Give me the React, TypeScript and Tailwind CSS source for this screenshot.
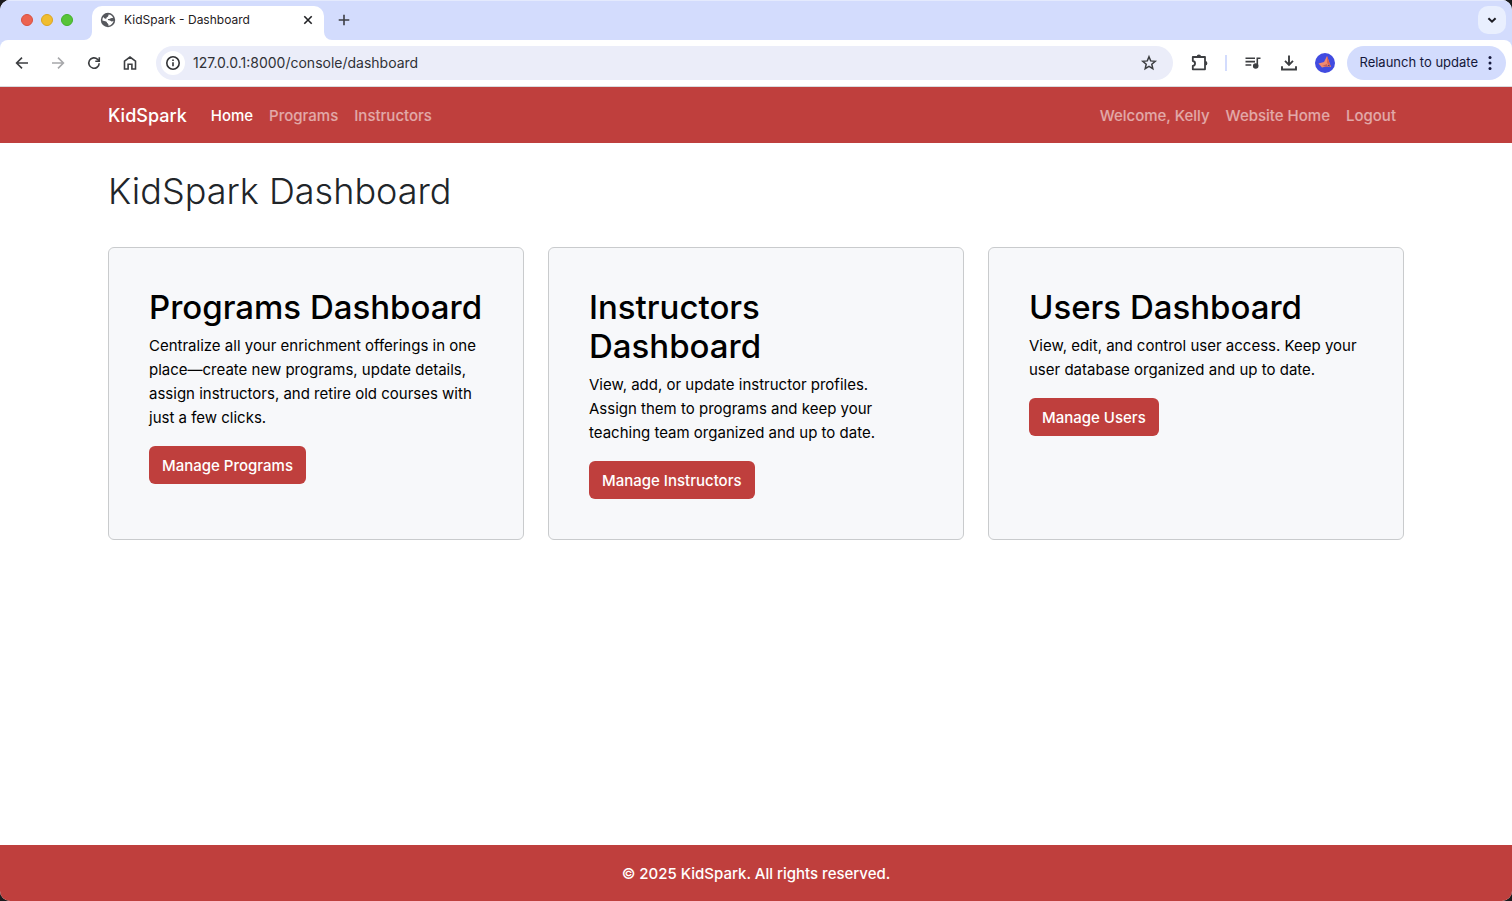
import type { ReactNode } from "react";

function Icon({ children, className = "size-5", viewBox = "0 0 20 20" }: { children: ReactNode; className?: string; viewBox?: string }) {
  return (
    <svg
      viewBox={viewBox}
      className={className}
      fill="none"
      stroke="currentColor"
      strokeWidth="1.6"
      aria-hidden="true"
    >
      {children}
    </svg>
  );
}

function ToolButton({ label, children, className = "text-[#3c3e41]" }: { label: string; children: ReactNode; className?: string }) {
  return (
    <button aria-label={label} className={`flex size-9 shrink-0 items-center justify-center rounded-full ${className}`}>
      {children}
    </button>
  );
}

function TabStrip() {
  return (
    <div className="flex h-10 items-end bg-[#d3dcfd] shadow-[inset_0_1px_0_#e4eafd]">
      <div className="flex h-10 w-[84px] items-center gap-2 pl-[21px]">
        <span className="size-3 rounded-full border border-[#d8503f] bg-[#ec6350]" />
        <span className="size-3 rounded-full border border-[#dba520] bg-[#f0bd2f]" />
        <span className="size-3 rounded-full border border-[#43b02a] bg-[#57c438]" />
      </div>
      <svg className="size-2 shrink-0" viewBox="0 0 8 8" fill="#fff" aria-hidden="true">
        <path d="M8 0v8H0a8 8 0 0 0 8-8z" />
      </svg>
      <div className="flex h-[34px] w-[232px] items-center rounded-t-[10px] bg-white pr-2 pb-1.5 pl-2">
        <svg className="size-4 shrink-0" viewBox="0 0 16 16" aria-hidden="true">
          <circle cx="8" cy="8" r="7.2" fill="#56585d" />
          <path
            d="M8.600 2.400c2.200.2 3.800 1.600 4.500 3.300-.9.400-2 .1-2.800.700-.6.500-1.500.500-2.300.600-.5.500.2 1.300 1 1.300 1.300 0 1.700 1.200 2.900 1.100.6 0 1.200-.4 1.700-.7-.5 2.600-2.500 4.700-5.200 5-.1-1.100.3-1.600-.6-2.200-1.100-.7-.6-1.700-1.700-2.100C4.900 9 3.600 9 2.400 8.500c-.1-1.200.2-2.400.8-3.400.6.800 1.500 1.700 2.500 1.700.9 0 .5-1.200 1.200-1.600.9-.6 1.500-.9 1.700-2.800z"
            fill="#fff"
          />
        </svg>
        <span className="ml-2 flex-1 text-xs text-[#1f2023]">KidSpark - Dashboard</span>
        <button aria-label="Close tab" className="flex size-4 items-center justify-center text-[#202124]">
          <Icon viewBox="0 0 16 16" className="size-4">
            <path d="M4.300 4.300l7.400 7.400M11.700 4.300l-7.400 7.400" />
          </Icon>
        </button>
      </div>
      <svg className="size-2 shrink-0" viewBox="0 0 8 8" fill="#fff" aria-hidden="true">
        <path d="M0 0v8h8a8 8 0 0 1-8-8z" />
      </svg>
      <button aria-label="New tab" className="flex h-10 w-6 items-center justify-center text-[#3c3e44]">
        <Icon viewBox="0 0 16 16" className="size-4">
          <path d="M8 2.700v10.600M2.700 8h10.600" />
        </Icon>
      </button>
      <button
        aria-label="Search tabs"
        className="mr-1.5 mb-1.5 ml-auto flex size-7 items-center justify-center rounded-[10px] bg-[#e9effe] text-[#1c1c24]"
      >
        <Icon viewBox="0 0 16 16" className="size-4">
          <path d="M4.400 6.300L8 9.700l3.600-3.400" strokeWidth="2" />
        </Icon>
      </button>
    </div>
  );
}

function Toolbar() {
  return (
    <div className="bg-[#d3dcfd]">
      <div className="flex h-[47px] items-center rounded-t-lg border-b border-[#d9dade] bg-white pr-1.5 pl-1">
        <ToolButton label="Back">
          <Icon>
            <path d="M16 10H4.500M10 4.600L4.600 10l5.400 5.400" />
          </Icon>
        </ToolButton>
        <ToolButton label="Forward" className="text-[#a7a8ab]">
          <Icon>
            <path d="M4 10h11.500M10 4.600l5.400 5.400L10 15.400" />
          </Icon>
        </ToolButton>
        <ToolButton label="Reload">
          <Icon>
            <path d="M15.200 10.200A5.200 5.200 0 1 1 13.600 6.300l1.600 1.600" />
            <path d="M15.300 4.200v4H11.300" />
          </Icon>
        </ToolButton>
        <ToolButton label="Home page">
          <Icon>
            <path d="M4.500 16V8.200L10 4l5.500 4.200V16h-3.600v-4.800H8.100V16z" />
          </Icon>
        </ToolButton>
        <div className="ml-2 flex h-[34px] flex-1 items-center rounded-full bg-[#ebedf9] pr-[15px] pl-[5px]">
          <button aria-label="Site information" className="flex size-6 items-center justify-center rounded-full bg-white text-[#303134]">
            <Icon className="size-4" viewBox="0 0 16 16">
              <circle cx="8" cy="8" r="6.200" />
              <path d="M8 7.200v4M8 4.500v1.500" />
            </Icon>
          </button>
          <input
            aria-label="Address"
            defaultValue="127.0.0.1:8000/console/dashboard"
            className="ml-2 min-w-0 flex-1 bg-transparent text-sm text-[#303136] outline-none"
          />
          <button aria-label="Bookmark this page" className="text-[#3c3e41]">
            <Icon className="size-[18px]" viewBox="0 0 18 18">
              <path d="M9 2.800l1.700 4.100 4.500.4-3.400 2.900 1 4.400L9 12.300l-3.800 2.300 1-4.400-3.400-2.900 4.500-.4z" strokeWidth="1.500" />
            </Icon>
          </button>
        </div>
        <div className="ml-2 flex items-center">
          <ToolButton label="Extensions">
            <Icon>
              <path d="M3.800 4h12.200v12.300H3.800v-3.500c3-.5 3-4.300 0-4.800z" strokeWidth="1.800" strokeLinejoin="round" />
              <path d="M7.700 3.800a2.200 2.400 0 0 1 4.400 0zM16.200 8a2.200 2.200 0 0 1 0 4.400z" fill="currentColor" stroke="none" />
            </Icon>
          </ToolButton>
          <span className="mx-2 h-4 w-0.5 bg-[#d3dcfd]" />
          <ToolButton label="Media controls">
            <Icon>
              <path d="M2.500 5.200h9.500M2.500 8.600h9.500M2.500 12h5.800M14.300 13V5.200h3.200" />
              <circle cx="12.700" cy="13" r="2" fill="currentColor" />
            </Icon>
          </ToolButton>
          <ToolButton label="Downloads">
            <Icon>
              <path d="M10 2.500v9M6 7.900l4 4 4-4M3 13.300v3.200h14v-3.200" strokeWidth="1.900" />
            </Icon>
          </ToolButton>
          <ToolButton label="Profile">
            <svg className="size-5" viewBox="0 0 20 20" aria-hidden="true">
              <circle cx="10" cy="10" r="10" fill="#414be0" />
              <path d="M3.500 10.500L9 9l3-6 4 11-5-.5-4 1z" fill="#f08a70" />
              <path d="M12 3l.200 7.300L15.500 13z" fill="#d9604f" />
              <path d="M7 13l5-2 1 2.700z" fill="#c45f5a" />
              <path d="M13.800 11.500l1.200 2-2-.6z" fill="#27277c" />
            </svg>
          </ToolButton>
        </div>
        <button className="ml-1 flex h-[34px] items-center gap-2 rounded-full bg-[#d3dcfd] px-3 text-[13px] text-[#14173a]">
          Relaunch to update
          <svg className="h-4 w-2" viewBox="0 0 8 16" fill="currentColor" aria-hidden="true">
            <circle cx="4" cy="2.500" r="1.500" />
            <circle cx="4" cy="8" r="1.500" />
            <circle cx="4" cy="13.500" r="1.500" />
          </svg>
        </button>
      </div>
    </div>
  );
}

function SiteNav() {
  return (
    <nav className="h-14 bg-[#bf3f3d] text-[15px] font-medium text-white/55">
      <div className="mx-auto flex h-full max-w-[1320px] items-center px-3 pt-0.5">
        <a href="#home" className="mr-4 text-lg text-white">
          KidSpark
        </a>
        <div className="flex flex-1">
          <a href="#home" className="px-2 text-white">
            Home
          </a>
          <a href="#programs" className="px-2">
            Programs
          </a>
          <a href="#instructors" className="px-2">
            Instructors
          </a>
        </div>
        <div className="flex">
          <a href="#profile" className="px-2">
            Welcome, Kelly
          </a>
          <a href="#website" className="px-2">
            Website Home
          </a>
          <a href="#logout" className="px-2">
            Logout
          </a>
        </div>
      </div>
    </nav>
  );
}

const cards = [
  {
    title: "Programs Dashboard",
    text: "Centralize all your enrichment offerings in one place—create new programs, update details, assign instructors, and retire old courses with just a few clicks.",
    action: "Manage Programs",
  },
  {
    title: "Instructors Dashboard",
    text: "View, add, or update instructor profiles.\nAssign them to programs and keep your\nteaching team organized and up to date.",
    action: "Manage Instructors",
  },
  {
    title: "Users Dashboard",
    text: "View, edit, and control user access. Keep your user database organized and up to date.",
    action: "Manage Users",
  },
];

export default function App() {
  return (
    <div className="bg-[#1b1b1d] font-['Inter','Liberation_Sans',sans-serif]">
      <div className="flex min-h-screen flex-col overflow-hidden rounded-[10px] bg-white">
        <TabStrip />
        <Toolbar />
        <SiteNav />
        <main className="mx-auto w-full max-w-[1320px] flex-1 px-3 py-6">
          <h1 className="mb-8 text-4xl leading-[48px] font-light text-[#212529]">KidSpark Dashboard</h1>
          <div className="grid grid-cols-3 gap-6">
            {cards.map((card) => (
              <section key={card.title} className="rounded-md border border-[#c9cbcd] bg-[#f7f8fa] p-10 text-black">
                <h2 className="mb-[7px] text-[33px] leading-[39px] font-medium">{card.title}</h2>
                <p className="mb-4 text-[15px] leading-6 whitespace-pre-line">{card.text}</p>
                <button className="h-[38px] rounded-md bg-[#bf3f3d] px-[13px] pt-0.5 text-[15px] font-medium text-white">{card.action}</button>
              </section>
            ))}
          </div>
        </main>
        <footer className="flex h-14 items-center justify-center bg-[#bf3f3d] pt-0.5 text-[15px] font-medium text-white">
          © 2025 KidSpark. All rights reserved.
        </footer>
      </div>
    </div>
  );
}
